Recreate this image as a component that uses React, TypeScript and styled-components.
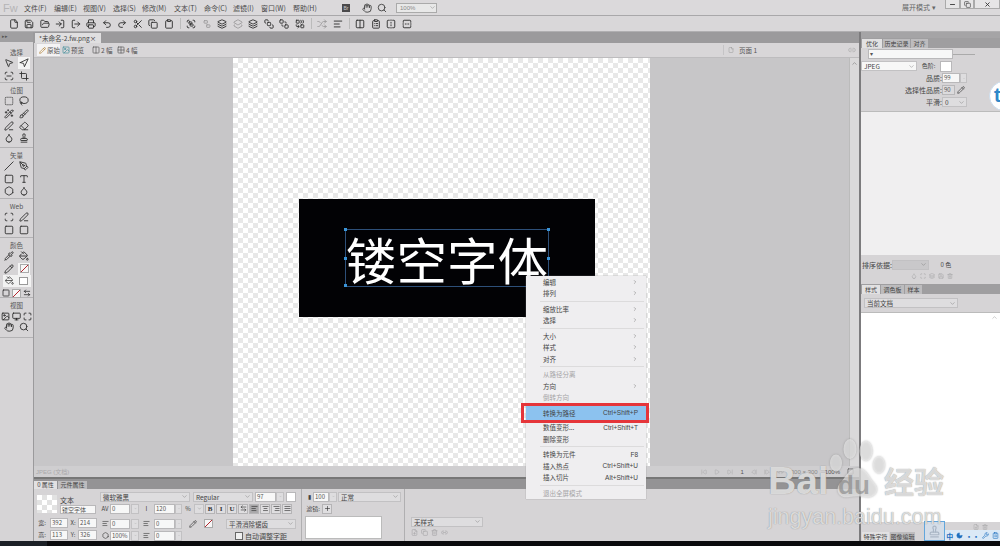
import React from "react";
import styled, { createGlobalStyle } from "styled-components";
import {
  File, Save, FolderOpen, LogIn, LogOut, Printer, Undo2, Redo2, Scissors, Copy, Clipboard,
  Group, Ungroup, Layers, Layers2, Layers3, Combine, AlignLeft, AlignCenter, AlignRight, AlignJustify,
  BringToFront, SendToBack, FlipHorizontal, FlipVertical, Shuffle, Columns2, Grid2x2, Image, Pencil,
  Hand, Search, MousePointer2, Navigation, Crop, ScanLine, SquareDashed, Lasso, Wand2, Brush, PenLine,
  Eraser, Droplet, Stamp, Slash, PenTool, Square, Type, Hexagon, Pipette, PaintBucket, Scan, Monitor,
  Maximize, ChevronDown, ChevronRight, ChevronUp, Minus, X, Plus, ArrowLeftRight,
  SkipBack, Play, SkipForward, StepBack, StepForward, Link2, Trash2, FilePlus, Wrench, Moon, ClipboardList,
} from "lucide-react";

const Global = createGlobalStyle`
  html, body { margin: 0; padding: 0; width: 1000px; height: 546px; overflow: hidden; background: #141518; }
  body, input, button { font-family: "Noto Sans CJK SC", "Noto Sans", sans-serif; }
  #root { width: 1000px; height: 546px; }
`;

const Page = styled.div`
  position: relative; width: 1000px; height: 546px; overflow: hidden;
  display: flex; flex-direction: column; background: #d8d6d8; color: #444; font-size: 7px; line-height: 10px;
`;
const MenuBar = styled.div`
  height: 16px; flex: none; display: flex; align-items: center; background: #dbd9db; border-bottom: 1px solid #a9a8aa; box-sizing: border-box; padding-left: 3px;
`;
const Logo = styled.span`
  width: 21px; font: 11px "Liberation Sans", sans-serif; color: #b5b4b6;
`;
const MenuLabel = styled.span<{ $w: number }>`
  width: ${(p) => p.$w}px; color: #4a4a4a; font-size: 7px; white-space: nowrap;
`;
const Bridge = styled.span`
  width: 8px; height: 8px; background: #4b4a4c; color: #ccc; font: 5px "Liberation Sans", sans-serif; text-align: center; line-height: 8px; margin: 0 9px 0 15px;
`;
const ZoomSelect = styled.span`
  width: 41px; height: 10px; margin-left: 6px; box-sizing: border-box; border: 1px solid #aaa; background: #e8e8e8; color: #888; padding-left: 3px; font: 6px/8px "Liberation Sans", sans-serif; display: flex; align-items: center; justify-content: space-between;
`;
const MenuRight = styled.div`
  margin-left: auto; display: flex; align-items: flex-start; height: 15px;
`;
const Workspace = styled.span`
  width: 43px; color: #666; font-size: 7px; margin-top: 2px;
`;
const WindowBtn = styled.span<{ $w: number }>`
  width: ${(p) => p.$w}px; height: 9px; box-sizing: border-box; border: 1px solid #aaa; border-top: none; display: flex; align-items: center; justify-content: center; background: #e6e5e6; color: #333;
`;
const ToolBar = styled.div`
  height: 16px; flex: none; display: flex; align-items: center; background: #d9d7d9; padding-left: 6px; color: #2e2e2e; border-bottom: 1px solid #b0afb1; box-sizing: border-box;
`;
const ToolBtn = styled.span<{ $dim?: boolean }>`
  width: 15.5px; flex: none; display: flex; justify-content: center; opacity: ${(p) => (p.$dim ? 0.35 : 1)};
`;
const ToolSep = styled.span`
  width: 1px; height: 11px; flex: none; background: #bbb; margin: 0 3px;
`;
const Main = styled.div`
  flex: 1; display: flex; min-height: 0;
`;
const Tools = styled.aside`
  width: 33px; flex: none; display: flex; flex-direction: column; background: #d6d4d6; border-right: 1px solid #9b9a9c;
`;
const ToolsHead = styled.div`
  height: 10px; flex: none; background: #a09fa1; color: #555; font-size: 5px; line-height: 8px; padding-left: 2px;
`;
const ToolSection = styled.section<{ $h: number; $top?: number }>`
  height: ${(p) => p.$h}px; padding-top: ${(p) => p.$top ?? 0}px; flex: none; box-sizing: border-box; border-bottom: 1px solid #b3b2b4; display: flex; flex-direction: column; align-items: center;
`;
const SectionTitle = styled.div`
  height: 12px; line-height: 14px; font-size: 6.5px; color: #555; text-align: center; flex: none;
`;
const ToolGrid = styled.div`
  display: grid; grid-template-columns: 15px 15px; grid-auto-rows: 12.4px; justify-items: center; align-items: center; color: #333;
`;
const ToolCell = styled.span<{ $on?: boolean }>`
  width: 12px; height: 12px; display: flex; align-items: center; justify-content: center; background: ${(p) => (p.$on ? "#f4f4f4" : "transparent")};
`;
const ColorWell = styled.div`
  width: 28px; height: 12px; flex: none; background: #f2f2f2; display: flex; align-items: center; justify-content: space-around;
`;
const SmallSwatch = styled.span`
  width: 9px; height: 8px; background: #fff; border: 1px solid #999; box-sizing: border-box;
`;
const MiniRow = styled.div`
  display: flex; gap: 2px; margin-top: 2px; color: #222; flex: none;
`;
const NoStroke = styled.span`
  width: 9px; height: 9px; flex: none; display: block; background: linear-gradient(135deg, #f6f6f6 44%, #b3262e 44%, #b3262e 56%, #f6f6f6 56%); border: 1px solid #aaa; box-sizing: border-box;
`;
const Center = styled.div`
  flex: 1; min-width: 0; display: flex; flex-direction: column;
`;
const TabStrip = styled.div`
  height: 11px; flex: none; background: #9b9a9c; display: flex; align-items: flex-end;
`;
const DocTab = styled.div`
  width: 66px; height: 10px; margin-left: 1px; background: #e0dfe0; color: #444; font-size: 6.5px; line-height: 10px; padding-left: 4px; box-sizing: border-box; display: flex; justify-content: space-between; padding-right: 5px; white-space: nowrap;
`;
const ViewBar = styled.div`
  height: 15px; flex: none; display: flex; align-items: center; background: #d8d6d8; padding-left: 3px; border-bottom: 1px solid #bdbcbe; color: #555; box-sizing: border-box;
`;
const ViewBtn = styled.span<{ $w: number; $on?: boolean }>`
  height: 12px; width: ${(p) => p.$w}px; display: flex; align-items: center; gap: 1px; padding-left: 2px; box-sizing: border-box; background: ${(p) => (p.$on ? "#f4f3f4" : "transparent")}; font-size: 6.5px; white-space: nowrap;
`;
const PageLabel = styled.span`
  margin-left: auto; width: 136px; display: flex; gap: 5px; align-items: center; color: #555; font-size: 6.5px; border-left: 1px solid #c5c4c6; padding: 0 3px 0 4px; box-sizing: border-box;
`;
const PageLink = styled.span`
  margin-left: auto; color: #aaa; display: flex;
`;
const Stage = styled.div`
  flex: 1; min-height: 0; display: flex; background: #c7c6c8;
`;
const StageBody = styled.div`
  flex: 1; display: flex; justify-content: flex-start; padding-left: 199px;
`;
const Checker = styled.div`
  width: 417px; height: 100%; position: relative; background: repeating-conic-gradient(#e8e8e8 0 25%, #ffffff 0 50%) 0 0 / 10px 10px;
`;
const ArtBoard = styled.div`
  position: absolute; left: 66px; top: 141px; width: 296px; height: 118px; background: #020205; color: #fff;
`;
const Selection = styled.div`
  position: absolute; left: 46px; top: 30px; width: 204px; height: 58px; box-sizing: border-box; border: 1px solid #2d4f78; font-size: 50.5px; line-height: 57px; white-space: nowrap; text-align: center; font-weight: 400;
`;
const Handle = styled.i<{ $x: number; $y: number }>`
  position: absolute; width: 3px; height: 3px; background: #3a94d8;
  left: ${(p) => p.$x}px; top: ${(p) => p.$y}px;
`;
const ScrollBar = styled.div`
  width: 10px; flex: none; background: #dad9da; border-left: 1px solid #bbb; box-sizing: border-box; color: #777; display: flex; flex-direction: column; align-items: center; padding-top: 2px;
`;
const StatusBar = styled.div`
  height: 13px; flex: none; display: flex; align-items: center; background: #cfced0; color: #a9a8aa; font: 6px "Liberation Sans", "Noto Sans CJK SC", sans-serif; padding: 0 5px 0 2px; border-bottom: 2px solid #777; box-sizing: border-box; gap: 7px;
`;
const StatusLeft = styled.span`
  margin-right: auto;
`;
const StatusText = styled.span<{ $dark?: boolean }>`
  color: ${(p) => (p.$dark ? "#555" : "#888")};
`;
const PropTabs = styled.div`
  height: 10px; flex: none; background: #949395; display: flex; align-items: flex-end; gap: 1px;
`;
const PropTab = styled.span<{ $w: number; $on?: boolean }>`
  height: 8px; box-sizing: border-box; width: ${(p) => p.$w}px; background: ${(p) => (p.$on ? "#e2e1e2" : "#bdbcbe")}; color: #444; font-size: 6px; line-height: 8px; text-align: center; white-space: nowrap;
`;
const Props = styled.div`
  height: 52px; flex: none; display: flex; background: #d6d4d6;
`;
const PropGroup = styled.div<{ $w: number; $pad?: number; $line?: boolean }>`
  width: ${(p) => p.$w}px; flex: none; box-sizing: border-box; padding-left: ${(p) => p.$pad ?? 0}px; border-right: ${(p) => (p.$line ? "1px solid #b0afb1" : "none")}; display: flex; flex-direction: column;
`;
const Row = styled.div<{ $h?: number; $top?: number }>`
  height: ${(p) => p.$h ?? 11}px; display: flex; align-items: center; flex: none; margin-top: ${(p) => p.$top ?? 0}px; color: #444; white-space: nowrap;
`;
const Thumb = styled.div`
  width: 20px; height: 18px; background: repeating-conic-gradient(#e2e2e2 0 25%, #fff 0 50%) 0 0 / 10px 10px; margin: 3px 3px 0 3px; flex: none;
`;
const IdentCol = styled.div`
  display: flex; flex-direction: column; padding-top: 4px; font-size: 7px; color: #444;
`;
const Field = styled.span<{ $w: number; $h?: number; $l?: number; $bg?: string }>`
  width: ${(p) => p.$w}px; height: ${(p) => p.$h ?? 10}px; flex: none; margin-left: ${(p) => p.$l ?? 0}px; box-sizing: border-box; border: 1px solid #b9b8ba; background: ${(p) => p.$bg ?? "#f7f7f7"}; color: #555; font-size: 6px; line-height: 8px; padding-left: 1px; overflow: hidden; white-space: nowrap;
`;
const Drop = styled.span<{ $w: number; $l?: number; $bg?: string }>`
  width: ${(p) => p.$w}px; height: 10px; flex: none; margin-left: ${(p) => p.$l ?? 0}px; box-sizing: border-box; border: 1px solid #c2c1c3; background: ${(p) => p.$bg ?? "#dedddf"}; color: #444; font-size: 6.5px; line-height: 8px; padding: 0 1px 0 2px; display: flex; align-items: center; justify-content: space-between; white-space: nowrap;
`;
const Label = styled.span<{ $w: number }>`
  width: ${(p) => p.$w}px; flex: none; text-align: center; font-size: 6px; color: #444; display: flex; justify-content: center; white-space: nowrap;
`;
const FmtBtn = styled.span<{ $on?: boolean }>`
  width: 10px; height: 10px; flex: none; margin-left: 1px; box-sizing: border-box; border: 1px solid #b5b4b6; background: ${(p) => (p.$on ? "#aaa9ab" : "#dfdee0")}; color: #333; font: bold 7px/8px "Liberation Serif", serif; text-align: center; display: flex; align-items: center; justify-content: center;
`;
const WhiteBox = styled.div`
  width: 77px; height: 23px; margin-top: 2px; background: #fff; border: 1px solid #bbb; box-sizing: border-box; flex: none;
`;
const Check = styled.span`
  width: 6px; height: 6px; border: 1px solid #666; background: #f0f0f0; margin: 0 2px 0 53px; flex: none;
`;
const Right = styled.aside`
  width: 141px; flex: none; display: flex; flex-direction: column; background: #d6d4d6; border-left: 2px solid #7c7b7d; box-sizing: border-box;
`;
const RightHead = styled.div`
  height: 6px; flex: none; background: #a5a4a6;
`;
const PanelTabs = styled.div<{ $top?: number }>`
  height: 10px; margin-top: ${(p) => p.$top ?? 0}px; flex: none; background: #9f9ea0; display: flex; align-items: flex-end; gap: 1px; padding-left: 1px;
`;
const PanelTab = styled(PropTab)`
  height: 9px; line-height: 9px;
`;
const OptRow = styled.div<{ $h?: number }>`
  height: ${(p) => p.$h ?? 12}px; flex: none; display: flex; align-items: center; font-size: 7px; color: #444; position: relative;
`;
const OptLabel = styled.span`
  width: 81px; flex: none; text-align: right;
`;
const Ruled = styled.span`
  height: 1px; background: #aaa; flex: 1; margin-right: 25px;
`;
const PaleList = styled.div`
  flex: none; height: 144px; margin-top: 3px; background: #f0eff0; border-top: 1px solid #bbb; box-sizing: border-box;
`;
const SortRow = styled.div`
  height: 13px; margin-top: 3px; display: flex; align-items: center; font-size: 7px; color: #444; padding-left: 1px; flex: none;
`;
const IconRow = styled.div<{ $pad: number }>`
  height: 10px; flex: none; display: flex; gap: 3px; padding-left: ${(p) => p.$pad}px; color: #a9a8aa; align-items: center;
`;
const DocSelect = styled(Drop)`
  margin-left: 3px;
`;
const WhiteList = styled.div`
  flex: 1; min-height: 0; background: #fff; border-top: 1px solid #bbb; display: flex; justify-content: flex-end; color: #aaa; padding: 1px 2px 0 0;
`;
const BottomTabs = styled.div`
  height: 9px; flex: none; display: flex; gap: 1px; padding-left: 1px; background: #d6d4d6;
`;
const BlackFoot = styled.div`
  height: 5px; flex: none; background: linear-gradient(90deg, #1c2026 0 47px, #0a0a0c 47px);
`;
const ContextMenu = styled.div`
  position: absolute; left: 526px; top: 276px; width: 120px; height: 223px; box-sizing: border-box; background: #efeef0; box-shadow: 0 0 1px #888; display: flex; flex-direction: column; font-size: 6.5px; color: #444;
`;
const MenuRow = styled.div<{ $off?: boolean; $active?: boolean }>`
  height: 11.5px; flex: none; margin-bottom: ${(p) => (p.$active ? 3 : 0)}px; display: flex; align-items: center; padding: 0 8px 0 17px; color: ${(p) => (p.$off ? "#a5a4a6" : "#444")}; background: ${(p) => (p.$active ? "#8cc2ef" : "transparent")}; box-shadow: ${(p) => (p.$active ? "0 2px 0 #8cc2ef, 0 -1px 0 #8cc2ef" : "none")}; justify-content: space-between; position: relative;
`;
const MenuDivider = styled.div`
  height: 1px; background: #dcdbdc; margin: 1.5px 2px 1.5px 14px; flex: none;
`;
const Shortcut = styled.span`
  font: 6.5px "Liberation Sans", sans-serif; color: #444;
`;
const RedBox = styled.div`
  position: absolute; left: 521px; top: 403px; width: 128px; height: 20px; box-sizing: border-box; border: 3px solid #e5353a; pointer-events: none;
`;
const BlueBadge = styled.div`
  position: absolute; left: 989px; top: 81px; width: 30px; height: 30px; border-radius: 50%; background: #fff; border: 1px solid #cde; box-sizing: border-box; color: #2f88c9; font: bold 20px/26px "Liberation Sans", sans-serif; padding-left: 4px;
`;
const QQBox = styled.div`
  position: absolute; left: 924px; top: 521px; width: 21px; height: 20px; background: #d4dde8; border: 1px solid #62a6dc; box-sizing: border-box; color: #aab6c5; display: flex; align-items: center; justify-content: center;
`;
const ImeBar = styled.div`
  position: absolute; left: 945px; top: 530px; width: 55px; height: 11px; background: #dbe9f6; color: #1c6fc0; display: flex; align-items: center; justify-content: space-around; font-size: 7px; font-weight: 700;
`;
const Mark = styled.div`
  position: absolute; left: 0; top: 0; pointer-events: none; color: rgba(240,240,240,.78); text-shadow: 0 0 1px rgba(120,120,120,.9);
`;
const MarkBai = styled(Mark)`
  left: 768px; top: 458px; font: bold 39px/46px "Liberation Sans", sans-serif; letter-spacing: 0;
`;
const MarkDu = styled(Mark)`
  left: 838px; top: 470px; font: bold 26px/30px "Liberation Sans", sans-serif; color: rgba(120,120,120,.55); text-shadow: none;
`;
const MarkCn = styled(Mark)`
  left: 884px; top: 462px; font: 700 30px/36px "Noto Sans CJK SC", sans-serif;
`;
const MarkUrl = styled(Mark)`
  left: 768px; top: 504px; font: 21.5px/26px "Liberation Sans", sans-serif;
`;
const Paw = styled.svg`
  position: absolute; left: 825px; top: 436px; width: 62px; height: 64px; pointer-events: none;
  filter: drop-shadow(0 0 1px rgba(120,120,120,.8));
`;

const I = (C: React.ComponentType<any>, s = 10) => <C size={s} strokeWidth={2.2} />;

const topIcons: React.ComponentType<any>[] = [File, Save, FolderOpen, LogIn, LogOut, Printer, Undo2, Redo2, Scissors, Copy, Clipboard];
const topIcons2: [React.ComponentType<any>, boolean?][] = [
  [Group], [Ungroup, true], [Layers], [Layers2, true], [Layers3], [BringToFront], [SendToBack], [Combine],
];
const topMenu: [string, number][] = [
  ["文件(F)", 30], ["编辑(E)", 29], ["视图(V)", 30], ["选择(S)", 29], ["修改(M)", 32], ["文本(T)", 30], ["命令(C)", 29], ["滤镜(I)", 28], ["窗口(W)", 32], ["帮助(H)", 34],
];

const ToolGroup = ({ title, h, icons }: { title: string; h: number; icons: React.ComponentType<any>[] }) => (
  <ToolSection $h={h}>
    <SectionTitle>{title}</SectionTitle>
    <ToolGrid>
      {icons.map((C, i) => (
        <ToolCell key={i}>{I(C, 10)}</ToolCell>
      ))}
    </ToolGrid>
  </ToolSection>
);

type Item = { t: string; s?: string; arrow?: boolean; off?: boolean; active?: boolean } | null;
const menu: Item[] = [
  { t: "编辑", arrow: true }, { t: "排列", arrow: true }, null,
  { t: "缩放比率", arrow: true }, { t: "选择", arrow: true }, null,
  { t: "大小", arrow: true }, { t: "样式", arrow: true }, { t: "对齐", arrow: true }, null,
  { t: "从路径分离", off: true }, { t: "方向", arrow: true }, { t: "倒转方向", off: true }, null,
  { t: "转换为路径", s: "Ctrl+Shift+P", active: true },
  { t: "数值变形...", s: "Ctrl+Shift+T" }, { t: "删除变形" }, null,
  { t: "转换为元件", s: "F8" }, { t: "插入热点", s: "Ctrl+Shift+U" }, { t: "插入切片", s: "Alt+Shift+U" }, null,
  { t: "退出全屏模式", off: true },
];

const Caret = () => <ChevronDown size={7} strokeWidth={1.5} color="#777" />;

export default function App() {
  return (
    <Page>
      <Global />
      <MenuBar>
        <Logo>Fw</Logo>
        {topMenu.map(([t, w]) => <MenuLabel key={t} $w={w}>{t}</MenuLabel>)}
        <Bridge>Br</Bridge>
        <ToolBtn>{I(Hand, 10)}</ToolBtn>
        <ToolBtn>{I(Search, 10)}</ToolBtn>
        <ZoomSelect>100%<Caret /></ZoomSelect>
        <MenuRight>
          <Workspace>展开模式 ▾</Workspace>
          <WindowBtn $w={15}><Minus size={7} strokeWidth={3} /></WindowBtn>
          <WindowBtn $w={14}><Copy size={7} strokeWidth={2} /></WindowBtn>
          <WindowBtn $w={26}><X size={7} strokeWidth={3} /></WindowBtn>
        </MenuRight>
      </MenuBar>
      <ToolBar>
        {topIcons.map((C, i) => <ToolBtn key={i}>{I(C, 10)}</ToolBtn>)}
        <ToolSep />
        {topIcons2.map(([C, d], i) => <ToolBtn key={i} $dim={d}>{I(C, 10)}</ToolBtn>)}
        <ToolSep />
        <ToolBtn $dim>{I(Shuffle, 10)}</ToolBtn>
        <ToolBtn>{I(AlignLeft, 10)}</ToolBtn>
        <ToolSep />
        <ToolBtn>{I(Columns2, 10)}</ToolBtn>
        <ToolBtn>{I(ClipboardList, 10)}</ToolBtn>
        <ToolBtn>{I(FlipHorizontal, 10)}</ToolBtn>
        <ToolBtn>{I(FlipVertical, 10)}</ToolBtn>
      </ToolBar>
      <Main>
        <Tools>
          <ToolsHead>▸▸</ToolsHead>
          <ToolSection $h={41} $top={3}>
            <SectionTitle>选择</SectionTitle>
            <ToolGrid>
              <ToolCell>{I(MousePointer2)}</ToolCell>
              <ToolCell $on>{I(Navigation)}</ToolCell>
              <ToolCell>{I(ScanLine)}</ToolCell>
              <ToolCell>{I(Crop)}</ToolCell>
            </ToolGrid>
          </ToolSection>
          <ToolGroup title="位图" h={65} icons={[SquareDashed, Lasso, Wand2, Brush, PenLine, Eraser, Droplet, Stamp]} />
          <ToolGroup title="矢量" h={51} icons={[Slash, PenTool, Square, Type, Hexagon, Droplet]} />
          <ToolGroup title="Web" h={39} icons={[Scan, PenLine, Square, Square]} />
          <ToolSection $h={60}>
            <SectionTitle>颜色</SectionTitle>
            <ToolGrid>
              <ToolCell>{I(Pipette)}</ToolCell>
              <ToolCell>{I(PaintBucket)}</ToolCell>
              <ToolCell>{I(Pencil)}</ToolCell>
              <ToolCell $on><NoStroke /></ToolCell>
            </ToolGrid>
            <ColorWell>{I(PaintBucket, 9)}<SmallSwatch /></ColorWell>
            <MiniRow>{I(Square, 8)}<NoStroke />{I(ArrowLeftRight, 8)}</MiniRow>
          </ToolSection>
          <ToolSection $h={40}>
            <SectionTitle>视图</SectionTitle>
            <MiniRow>{I(Image, 9)}{I(Monitor, 9)}{I(Maximize, 9)}</MiniRow>
            <ToolGrid>
              <ToolCell>{I(Hand)}</ToolCell>
              <ToolCell>{I(Search)}</ToolCell>
            </ToolGrid>
          </ToolSection>
        </Tools>
        <Center>
          <TabStrip>
            <DocTab>*未命名-2.fw.png <span>×</span></DocTab>
          </TabStrip>
          <ViewBar>
            <ViewBtn $w={23} $on><Pencil size={7} color="#a8721e" />原始</ViewBtn>
            <ViewBtn $w={30}><Image size={8} color="#3d8d99" />预览</ViewBtn>
            <ViewBtn $w={25}><Columns2 size={8} />2 幅</ViewBtn>
            <ViewBtn $w={25}><Grid2x2 size={8} />4 幅</ViewBtn>
            <PageLabel><File size={6} color="#999" />页面 1<PageLink><Link2 size={8} /></PageLink></PageLabel>
          </ViewBar>
          <Stage>
            <StageBody>
              <Checker>
                <ArtBoard>
                  <Selection>
                    镂空字体
                    <Handle $x={-2} $y={-2} /><Handle $x={201} $y={-2} />
                    <Handle $x={-2} $y={27} /><Handle $x={201} $y={27} />
                    <Handle $x={-2} $y={54} /><Handle $x={201} $y={54} />
                  </Selection>
                </ArtBoard>
              </Checker>
            </StageBody>
            <ScrollBar><ChevronUp size={7} /></ScrollBar>
          </Stage>
          <StatusBar>
            <StatusLeft>JPEG (文档)</StatusLeft>
            <SkipBack size={6} /><Play size={6} /><SkipForward size={6} />
            <StatusText $dark>1</StatusText>
            <StepBack size={6} /><StepForward size={6} /><Link2 size={7} />
            <StatusText>300 × 300</StatusText>
            <StatusText $dark>100%</StatusText>
            <Square size={7} color="#555" />
          </StatusBar>
          <PropTabs>
            <PropTab $w={23} $on>0 属性</PropTab>
            <PropTab $w={29}>元件属性</PropTab>
          </PropTabs>
          <Props>
            <PropGroup $w={66}>
              <Row $h={26}>
                <Thumb />
                <IdentCol>文本<Field $w={36} $h={9}>镂空字体</Field></IdentCol>
              </Row>
              <Row $top={2} $h={12}>
                <Label $w={16}>宽:</Label><Field $w={18}>392</Field><Label $w={10}>X:</Label><Field $w={19}>214</Field>
              </Row>
              <Row $h={12}>
                <Label $w={16}>高:</Label><Field $w={18}>113</Field><Label $w={10}>Y:</Label><Field $w={19}>326</Field>
              </Row>
            </PropGroup>
            <PropGroup $w={202} $line>
              <Row $top={2}>
                <Drop $w={90}>微软雅黑<Caret /></Drop>
                <Drop $w={60} $l={3}>Regular<Caret /></Drop>
                <Field $w={21} $l={2}>97</Field>
                <Drop $w={8}><Caret /></Drop>
                <Field $w={10} $l={2} $bg="#fff" />
              </Row>
              <Row $top={1}>
                <Label $w={10}>AV</Label><Field $w={20}>0</Field><Drop $w={8} $l={1}><Caret /></Drop>
                <Label $w={15}>I</Label><Field $w={21}>120</Field><Drop $w={7}><Caret /></Drop>
                <Label $w={12}>%</Label><Drop $w={10}><Caret /></Drop>
                <FmtBtn>B</FmtBtn><FmtBtn>I</FmtBtn><FmtBtn>U</FmtBtn><FmtBtn>{I(ArrowLeftRight, 7)}</FmtBtn>
                <FmtBtn $on>{I(AlignLeft, 7)}</FmtBtn><FmtBtn>{I(AlignCenter, 7)}</FmtBtn><FmtBtn>{I(AlignRight, 7)}</FmtBtn><FmtBtn>{I(AlignJustify, 7)}</FmtBtn>
              </Row>
              <Row $top={4}>
                <Label $w={10}>{I(AlignLeft, 7)}</Label><Field $w={20}>0</Field><Drop $w={8} $l={1}><Caret /></Drop>
                <Label $w={15}>{I(AlignLeft, 7)}</Label><Field $w={21}>0</Field><Drop $w={7}><Caret /></Drop>
                <Label $w={22}>{I(Pencil, 8)}</Label><NoStroke />
                <Drop $w={70} $l={13}>平滑消除锯齿<Caret /></Drop>
              </Row>
              <Row $top={1}>
                <Label $w={10}>{I(Hexagon, 7)}</Label><Field $w={20}>100%</Field><Drop $w={8} $l={1}><Caret /></Drop>
                <Label $w={15}>{I(AlignLeft, 7)}</Label><Field $w={21}>0</Field><Drop $w={7}><Caret /></Drop>
                <Check />自动调整字距
              </Row>
            </PropGroup>
            <PropGroup $w={103} $pad={3} $line>
              <Row $top={2}>
                <Label $w={8}>▮</Label><Field $w={16}>100</Field><Drop $w={8}><Caret /></Drop>
                <Drop $w={63} $l={1}>正常<Caret /></Drop>
              </Row>
              <Row $top={1}>
                <Label $w={16}>滤镜:</Label><FmtBtn>{I(Plus, 7)}</FmtBtn>
              </Row>
              <WhiteBox />
            </PropGroup>
            <PropGroup $w={200} $pad={6}>
              <Row $top={27}><Drop $w={72}>无样式<Caret /></Drop></Row>
              <IconRow $pad={0}>{I(FilePlus, 7)}{I(Copy, 7)}{I(Trash2, 7)}{I(Link2, 7)}</IconRow>
            </PropGroup>
          </Props>
        </Center>
        <Right>
          <RightHead />
          <PanelTabs>
            <PanelTab $w={20} $on>优化</PanelTab>
            <PanelTab $w={27}>历史记录</PanelTab>
            <PanelTab $w={17}>对齐</PanelTab>
          </PanelTabs>
          <OptRow>
            <Field $w={85} $l={7}>▾</Field><Ruled />
          </OptRow>
          <OptRow>
            <Drop $w={56} $bg="#f7f7f7">JPEG<Caret /></Drop>
            <Label $w={23}>色阶:</Label>
            <Field $w={12} $h={11} $bg="#fff" />
          </OptRow>
          <OptRow>
            <OptLabel>品质:</OptLabel><Field $w={18}>99</Field><Drop $w={7}><Caret /></Drop>
          </OptRow>
          <OptRow>
            <OptLabel>选择性品质:</OptLabel><Field $w={13} $bg="#dcdbdd">90</Field><Label $w={12}>{I(Pencil, 8)}</Label>
          </OptRow>
          <OptRow>
            <OptLabel>平滑:</OptLabel><Drop $w={25}>0<Caret /></Drop>
          </OptRow>
          <PaleList />
          <SortRow>
            排序依据:<Drop $w={37} $bg="#c9c8ca"><span /><Caret /></Drop>
            <Label $w={34}>0 色</Label>
          </SortRow>
          <IconRow $pad={50}>{I(Droplet, 6)}{I(Scan, 6)}{I(Layers, 6)}{I(Save, 6)}{I(Trash2, 6)}</IconRow>
          <PanelTabs $top={3}>
            <PanelTab $w={18} $on>样式</PanelTab>
            <PanelTab $w={23}>调色板</PanelTab>
            <PanelTab $w={17}>样本</PanelTab>
          </PanelTabs>
          <OptRow $h={18}>
            <DocSelect $w={94}>当前文档<Caret /></DocSelect>
          </OptRow>
          <WhiteList><ChevronUp size={7} /></WhiteList>
          <IconRow $pad={112}>{I(FilePlus, 6)}{I(Trash2, 6)}</IconRow>
          <BottomTabs>
            <PanelTab $w={27} $on>特殊字符</PanelTab>
            <PanelTab $w={25}>图像编辑</PanelTab>
          </BottomTabs>
        </Right>
      </Main>
      <BlackFoot />

      <ContextMenu>
        {menu.map((m, i) =>
          m === null ? <MenuDivider key={i} /> : (
            <MenuRow key={i} $off={m.off} $active={m.active}>
              <span>{m.t}</span>
              {m.s && <Shortcut>{m.s}</Shortcut>}
              {m.arrow && <ChevronRight size={6} color="#777" />}
            </MenuRow>
          ),
        )}
      </ContextMenu>
      <RedBox />
      <BlueBadge>t</BlueBadge>
      <QQBox>{I(Stamp, 13)}</QQBox>
      <ImeBar>中<Moon size={7} fill="currentColor" /><span>··</span><Wrench size={7} /><ClipboardList size={7} /></ImeBar>

      <Paw viewBox="0 0 62 64" fill="rgba(240,240,240,.62)">
        <ellipse cx="25" cy="13" rx="6.5" ry="10" />
        <ellipse cx="41" cy="15" rx="6.5" ry="10" />
        <ellipse cx="11" cy="27" rx="6" ry="8.5" />
        <ellipse cx="54" cy="29" rx="6" ry="8.5" />
        <path d="M33 32 C42 32 44 42 50 48 C56 56 48 63 40 61 C35 60 30 60 24 61 C15 63 9 55 15 47 C21 41 24 32 33 32 Z" />
      </Paw>
      <MarkBai>Bai</MarkBai>
      <MarkDu>du</MarkDu>
      <MarkCn>经验</MarkCn>
      <MarkUrl>jingyan.baidu.com</MarkUrl>
    </Page>
  );
}
